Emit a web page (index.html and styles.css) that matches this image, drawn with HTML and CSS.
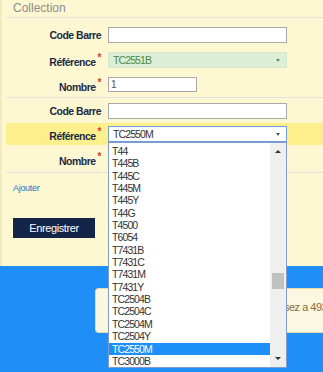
FILE: index.html
```html
<!DOCTYPE html>
<html lang="fr">

<head>
    <meta charset="UTF-8">
    <meta name="viewport" content="width=device-width, initial-scale=1.0">
    <title>Collection</title>
    <link rel="stylesheet" href="styles.css">
</head>

<body>
    <form class="panel">
        <div class="legend">Collection</div>

        <div class="group">
            <div class="row">
                <label class="lbl">Code Barre</label>
                <input type="text" class="field">
            </div>
            <div class="row">
                <label class="lbl">Référence<span class="req">*</span></label>
                <div class="sel sel-ok">TC2551B<span class="arrow"></span></div>
            </div>
            <div class="row">
                <label class="lbl">Nombre<span class="req">*</span></label>
                <input type="text" class="field short" value="1">
            </div>
        </div>

        <div class="group">
            <div class="row">
                <label class="lbl">Code Barre</label>
                <input type="text" class="field">
            </div>
            <div class="row row-hl">
                <label class="lbl">Référence<span class="req">*</span></label>
                <div class="sel-wrap">
                    <div class="sel sel-focus">TC2550M<span class="arrow"></span></div>
                    <div class="drop">
                        <ul class="opts">
                            <li>T44</li>
                            <li>T445B</li>
                            <li>T445C</li>
                            <li>T445M</li>
                            <li>T445Y</li>
                            <li>T44G</li>
                            <li>T4500</li>
                            <li>T6054</li>
                            <li>T7431B</li>
                            <li>T7431C</li>
                            <li>T7431M</li>
                            <li>T7431Y</li>
                            <li>TC2504B</li>
                            <li>TC2504C</li>
                            <li>TC2504M</li>
                            <li>TC2504Y</li>
                            <li class="on">TC2550M</li>
                            <li>TC3000B</li>
                        </ul>
                        <div class="scroll">
                            <span class="up"></span>
                            <span class="thumb"></span>
                            <span class="down"></span>
                        </div>
                    </div>
                </div>
            </div>
            <div class="row row-last">
                <label class="lbl">Nombre<span class="req">*</span></label>
                <input type="text" class="field short">
            </div>
        </div>

        <a href="#" class="add">Ajouter</a>

        <input type="button" class="save" value="Enregistrer">
    </form>

    <div class="notice">Quantité insuffisante, vous dépassez a 493 articles</div>
</body>

</html>
```

FILE: styles.css
```css
* {
    margin: 0;
    padding: 0;
    box-sizing: border-box;
}

html,
body {
    height: 100%;
}

body {
    background-color: #1f8ef7;
    font-family: "Liberation Sans", Arial, sans-serif;
}

.panel {
    position: relative;
    z-index: 2;
    height: 266px;
    background-color: #fdf8d2;
    border-left: 2px solid #f1ebbd;
    padding-left: 4px;
}

.legend {
    height: 18px;
    padding-left: 7px;
    font-size: 12px;
    line-height: 16px;
    color: #8c8c8c;
    border-bottom: 1px dotted #cfcfcf;
}

.group {
    padding-top: 4px;
    border-bottom: 1px dotted #cfcfcf;
}

.group+.group {
    padding-top: 0;
}

.row {
    display: flex;
    align-items: center;
    height: 25px;
}

.row-hl {
    height: 22px;
    background-color: #fdf08c;
}

.row-last {
    height: 27px;
}

.lbl {
    width: 102px;
    padding-right: 7px;
    text-align: right;
    font-weight: bold;
    font-size: 10.5px;
    letter-spacing: -0.5px;
    color: #1c2a45;
}

.req {
    color: #d9362b;
    font-size: 10px;
    vertical-align: 5px;
    margin-left: 2px;
}

.field {
    width: 179px;
    height: 16px;
    border: 1px solid #a8a8a8;
    background-color: #ffffff;
    font-family: inherit;
    font-size: 10px;
    letter-spacing: -0.8px;
    color: #555;
    padding-left: 2px;
    outline: none;
}

.short {
    width: 89px;
    height: 15px;
}

.sel {
    position: relative;
    width: 179px;
    height: 16px;
    padding-left: 4px;
    font-size: 10.5px;
    letter-spacing: -0.9px;
    line-height: 14px;
}

.sel-ok {
    background-color: #dcefd6;
    border: 1px solid #d3e8ca;
    color: #4a8a4a;
}

.sel-focus {
    background-color: #ffffff;
    border: 1px solid #6f9fd8;
    color: #333333;
}

.arrow {
    position: absolute;
    right: 6px;
    top: 6px;
    border-left: 2.5px solid transparent;
    border-right: 2.5px solid transparent;
    border-top: 3px solid #555;
}

.sel-ok .arrow {
    border-top-color: #4a9a4a;
}

.sel-wrap {
    position: relative;
}

.drop {
    position: absolute;
    top: 16px;
    left: 0;
    width: 179px;
    height: 226px;
    background-color: #ffffff;
    border: 1px solid #7f9ccc;
    display: flex;
    z-index: 5;
}

.opts {
    flex: 1;
    list-style: none;
    padding-top: 2px;
}

.opts li {
    height: 12.35px;
    line-height: 12.35px;
    padding-left: 3px;
    font-size: 10.5px;
    letter-spacing: -0.9px;
    color: #333333;
}

.opts li.on {
    background-color: #1e8ff9;
    color: #ffffff;
}

.scroll {
    position: relative;
    width: 16px;
    background-color: #efefef;
}

.up,
.down {
    position: absolute;
    left: 5px;
    border-left: 3px solid transparent;
    border-right: 3px solid transparent;
}

.up {
    top: 7px;
    border-bottom: 3px solid #333;
}

.down {
    bottom: 7px;
    border-top: 3px solid #333;
}

.thumb {
    position: absolute;
    left: 2px;
    top: 130px;
    width: 12px;
    height: 16px;
    background-color: #c1c1c1;
}

.add {
    display: block;
    margin: 10px 0 0 7px;
    font-size: 9px;
    letter-spacing: -0.3px;
    color: #1f74c9;
    text-decoration: none;
}

.save {
    display: block;
    margin: 25px 0 0 7px;
    width: 82px;
    height: 20px;
    border: none;
    background-color: #13264a;
    color: #ffffff;
    font-family: inherit;
    font-size: 11px;
    letter-spacing: -0.4px;
}

.notice {
    margin: 22px 0 0 95px;
    height: 45px;
    padding: 12px 0 0 42px;
    background-color: #fbf7e1;
    border: 1px solid #e9dca6;
    border-right: none;
    border-radius: 4px 0 0 4px;
    color: #8a6d3b;
    font-size: 11px;
    letter-spacing: -0.5px;
    white-space: nowrap;
    overflow: hidden;
}
```
